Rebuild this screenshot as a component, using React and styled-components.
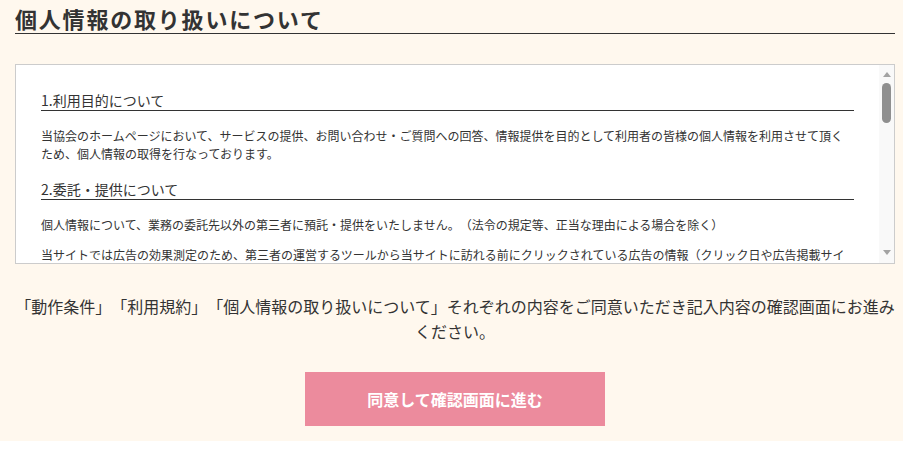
import React from "react";
import styled, { createGlobalStyle } from "styled-components";

const GlobalStyle = createGlobalStyle`
  body {
    margin: 0;
    background: #ffffff;
    font-family: "Noto Sans CJK JP", "Noto Sans", sans-serif;
    color: #333;
    text-spacing-trim: space-all;
  }
`;

const items = [
  {
    title: "1.利用目的について",
    texts: [
      "当協会のホームページにおいて、サービスの提供、お問い合わせ・ご質問への回答、情報提供を目的として利用者の皆様の個人情報を利用させて頂くため、個人情報の取得を行なっております。",
    ],
  },
  {
    title: "2.委託・提供について",
    texts: [
      "個人情報について、業務の委託先以外の第三者に預託・提供をいたしません。（法令の規定等、正当な理由による場合を除く）",
      "当サイトでは広告の効果測定のため、第三者の運営するツールから当サイトに訪れる前にクリックされている広告の情報（クリック日や広告掲載サイト等）を取得しております。",
    ],
  },
  {
    title: "3.個人情報の管理について",
    texts: [
      "お預かりした個人情報は、適切な安全対策を講じ、漏洩・紛失・改ざん等の防止に努めます。",
    ],
  },
];

const App = () => {
  return (
    <>
      <GlobalStyle />
      <Page>
        <Title>個人情報の取り扱いについて</Title>

        <PolicyBox>
          <PolicyBody>
            {items.map((item, i) => (
              <div key={i}>
                <ItemTitle first={i === 0}>{item.title}</ItemTitle>
                {item.texts.map((t, j) => (
                  <ItemText key={j}>{t}</ItemText>
                ))}
              </div>
            ))}
          </PolicyBody>
          <ScrollTrack>
            <ScrollArrow />
            <ScrollThumb />
            <ScrollArrow down />
          </ScrollTrack>
        </PolicyBox>

        <Notice>
          「動作条件」「利用規約」「個人情報の取り扱いについて」それぞれの内容をご同意いただき記入内容の確認画面にお進みください。
        </Notice>

        <AgreeButton>同意して確認画面に進む</AgreeButton>
      </Page>
    </>
  );
};

const Page = styled.div`
  background: #fff8ee;
  padding: 0 8px 15px 15px;
`;

const Title = styled.h2`
  margin: 0;
  padding-top: 3px;
  font-size: 22px;
  line-height: 30px;
  font-weight: 700;
  letter-spacing: 1.8px;
  color: #333;
  border-bottom: 1px solid #333;
`;

const PolicyBox = styled.div`
  margin-top: 30px;
  height: 200px;
  box-sizing: border-box;
  border: 1px solid #cccccc;
  background: #ffffff;
  display: flex;
`;

const PolicyBody = styled.div`
  flex: 1;
  overflow: hidden;
  padding: 25px 25px 0;
`;

const ItemTitle = styled.h3`
  margin: ${(p) => (p.first ? "0" : "16px")} 0 16px;
  font-size: 14px;
  line-height: 20px;
  font-weight: 400;
  color: #333;
  border-bottom: 1px solid #333;
`;

const ItemText = styled.p`
  margin: 0 0 12px;
  font-size: 12px;
  line-height: 18px;
  color: #333;
`;

const ScrollTrack = styled.div`
  width: 15px;
  background: #f9f9f9;
  display: flex;
  flex-direction: column;
  align-items: center;
`;

const ScrollArrow = styled.div`
  width: 0;
  height: 0;
  border-left: 4.5px solid transparent;
  border-right: 4.5px solid transparent;
  ${(p) =>
    p.down
      ? `border-top: 5px solid #a3a3a3; margin: auto 0 8px;`
      : `border-bottom: 5px solid #a3a3a3; margin-top: 7px;`}
`;

const ScrollThumb = styled.div`
  margin-top: 6px;
  width: 9px;
  height: 40px;
  border-radius: 5px;
  background: #8f8f8f;
`;

const Notice = styled.p`
  margin: 30px 0 28px;
  font-size: 16px;
  line-height: 25px;
  text-align: center;
  color: #333;
`;

const AgreeButton = styled.button`
  display: block;
  margin: 0 auto;
  width: 300px;
  height: 54px;
  border: none;
  background: #ec8b9d;
  color: #ffffff;
  font-family: "Noto Sans CJK JP", "Noto Sans", sans-serif;
  font-size: 16px;
  font-weight: 700;
  cursor: pointer;
`;

export default App;
